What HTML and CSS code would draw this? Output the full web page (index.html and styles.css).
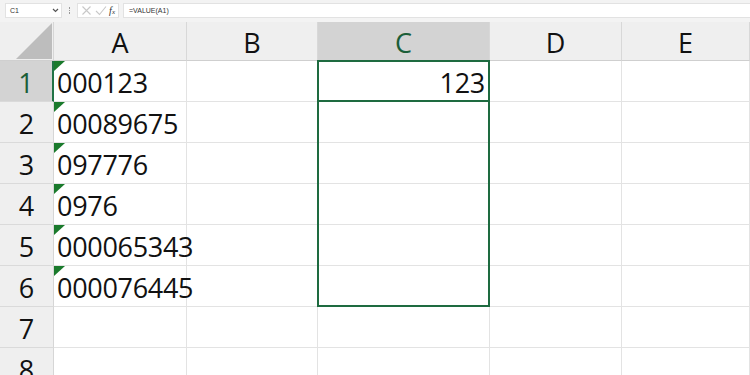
FILE: index.html
```html
<!DOCTYPE html>
<html>
<head>
  <title>Excel - VALUE</title>
  <link rel="stylesheet" href="styles.css">
</head>
<body>
  <div class="formula-bar">
    <div class="namebox">
      <span>C1</span>
      <svg class="chev" width="7" height="5" viewBox="0 0 7 5"><path d="M1 1 L3.5 3.5 L6 1" fill="none" stroke="#555" stroke-width="1.2"/></svg>
    </div>
    <div class="dots"><i></i><i></i><i></i></div>
    <div class="fxbox">
      <svg width="11" height="11" viewBox="0 0 11 11"><path d="M1.5 1.5 L9.5 9.5 M9.5 1.5 L1.5 9.5" stroke="#c8c8c8" stroke-width="1.1"/></svg>
      <svg width="12" height="11" viewBox="0 0 12 11"><path d="M1 6 L4.5 9.5 L11 1.5" fill="none" stroke="#c8c8c8" stroke-width="1.1"/></svg>
      <span class="fx">f<sub>x</sub></span>
    </div>
    <div class="formula">=VALUE(A1)</div>
  </div>

  <div class="sheet">
    <div class="corner"><div class="tri"></div></div>
    <div class="colhead">A</div>
    <div class="colhead">B</div>
    <div class="colhead sel">C</div>
    <div class="colhead">D</div>
    <div class="colhead">E</div>

    <div class="rowhead sel">1</div>
    <div class="cell txt">000123</div>
    <div class="cell"></div>
    <div class="cell num active">123<div class="selection"></div></div>
    <div class="cell"></div>
    <div class="cell"></div>

    <div class="rowhead">2</div>
    <div class="cell txt">00089675</div>
    <div class="cell"></div>
    <div class="cell"></div>
    <div class="cell"></div>
    <div class="cell"></div>

    <div class="rowhead">3</div>
    <div class="cell txt">097776</div>
    <div class="cell"></div>
    <div class="cell"></div>
    <div class="cell"></div>
    <div class="cell"></div>

    <div class="rowhead">4</div>
    <div class="cell txt">0976</div>
    <div class="cell"></div>
    <div class="cell"></div>
    <div class="cell"></div>
    <div class="cell"></div>

    <div class="rowhead">5</div>
    <div class="cell txt">000065343</div>
    <div class="cell"></div>
    <div class="cell"></div>
    <div class="cell"></div>
    <div class="cell"></div>

    <div class="rowhead">6</div>
    <div class="cell txt">000076445</div>
    <div class="cell"></div>
    <div class="cell"></div>
    <div class="cell"></div>
    <div class="cell"></div>

    <div class="rowhead">7</div>
    <div class="cell"></div>
    <div class="cell"></div>
    <div class="cell"></div>
    <div class="cell"></div>
    <div class="cell"></div>

    <div class="rowhead">8</div>
    <div class="cell"></div>
    <div class="cell"></div>
    <div class="cell"></div>
    <div class="cell"></div>
    <div class="cell"></div>
  </div>
</body>
</html>
```

FILE: styles.css
```css
body {
  margin: 0;
  width: 750px;
  height: 375px;
  overflow: hidden;
  background: #ffffff;
  font-family: "Open Sans", "Noto Sans", sans-serif;
}

.formula-bar {
  height: 22px;
  box-sizing: border-box;
  display: flex;
  align-items: center;
  padding: 2px 0 3px 5px;
  background: #f3f3f3;
  font-family: "Liberation Sans", Arial, sans-serif;
}
.namebox {
  width: 57px;
  height: 15px;
  box-sizing: border-box;
  background: #fff;
  border: 1px solid #e2e2e2;
  display: flex;
  align-items: center;
  justify-content: space-between;
  padding: 0 2px 0 4px;
  font-size: 7px;
  color: #333;
}
.chev {
  display: block;
}
.dots {
  width: 15px;
  display: flex;
  flex-direction: column;
  align-items: center;
  gap: 1px;
}
.dots i {
  width: 1.5px;
  height: 1.5px;
  background: #999;
}
.fxbox {
  width: 42px;
  height: 15px;
  box-sizing: border-box;
  background: #fff;
  border: 1px solid #e2e2e2;
  display: flex;
  align-items: center;
  justify-content: space-between;
  padding: 0 3px 0 3px;
}
.fxbox svg {
  display: block;
}
.fx {
  font-family: "Liberation Serif", serif;
  font-style: italic;
  font-size: 10px;
  color: #333;
  line-height: 1;
}
.fx sub {
  font-size: 7px;
  vertical-align: 0;
}
.formula {
  flex: 1;
  height: 15px;
  box-sizing: border-box;
  margin-left: 4px;
  background: #fff;
  border: 1px solid #e2e2e2;
  border-right: none;
  font-size: 7px;
  color: #333;
  padding-left: 5px;
  display: flex;
  align-items: center;
}

.sheet {
  display: grid;
  grid-template-columns: 54px 133px 131px 172px 132px 1fr;
  grid-template-rows: 39px repeat(8, 41px);
  font-size: 27px;
  color: #111;
}
.corner {
  background: #efefef;
  border-right: 1px solid #d6d6d6;
  border-bottom: 1px solid #cfcfcf;
  box-sizing: border-box;
  position: relative;
}
.tri {
  position: absolute;
  right: 1px;
  bottom: 1px;
  width: 0;
  height: 0;
  border-left: 36px solid transparent;
  border-bottom: 36px solid #bdbdbd;
}
.colhead {
  background: #efefef;
  border-right: 1px solid #d8d8d8;
  border-bottom: 1px solid #cfcfcf;
  box-sizing: border-box;
  display: flex;
  align-items: center;
  justify-content: center;
  padding-top: 2px;
}
.colhead.sel {
  background: #d3d3d3;
  color: #1b5e38;
}
.rowhead {
  background: #efefef;
  border-right: 1px solid #d6d6d6;
  border-bottom: 1px solid #dadada;
  box-sizing: border-box;
  display: flex;
  align-items: center;
  justify-content: center;
  padding-top: 2px;
}
.rowhead.sel {
  background: #d3d3d3;
  color: #1b5e38;
  border-right: 2px solid #217346;
}
.cell {
  border-right: 1px solid #e3e3e3;
  border-bottom: 1px solid #e3e3e3;
  box-sizing: border-box;
  display: flex;
  align-items: center;
  padding: 2px 4px 0 3px;
  letter-spacing: -0.3px;
  white-space: nowrap;
  min-width: 0;
}
.cell.txt {
  position: relative;
  z-index: 1;
}
.cell.txt::before {
  content: "";
  position: absolute;
  left: 0;
  top: 0;
  border-top: 10px solid #1a7a2c;
  border-right: 11px solid transparent;
}
.cell.num {
  justify-content: flex-end;
}
.active {
  position: relative;
}
.active::after {
  content: "";
  position: absolute;
  left: -1px;
  top: -1px;
  right: -1px;
  bottom: -1px;
  border: 2px solid #1e6b40;
}
.selection {
  position: absolute;
  left: -1px;
  top: -1px;
  width: 173px;
  height: 247px;
  box-sizing: border-box;
  border: 2px solid #1e6b40;
  pointer-events: none;
  z-index: 2;
}
```
